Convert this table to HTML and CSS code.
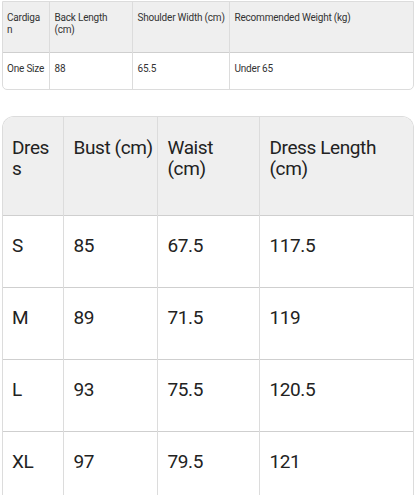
FILE: index.html
```html
<!DOCTYPE html>
<html>
<head>
<meta charset="utf-8">
<link rel="stylesheet" href="styles.css">
</head>
<body>
<div class="sheet sheet-small">
  <table class="grid small">
    <colgroup><col class="s1"><col class="s2"><col class="s3"><col class="s4"></colgroup>
    <thead>
      <tr><th class="narrow">Cardigan</th><th>Back Length (cm)</th><th class="one-line">Shoulder Width (cm)</th><th>Recommended Weight (kg)</th></tr>
    </thead>
    <tbody>
      <tr><td class="one-line">One Size</td><td>88</td><td>65.5</td><td>Under 65</td></tr>
    </tbody>
  </table>
</div>
<div class="sheet sheet-large">
  <table class="grid large">
    <colgroup><col class="l1"><col class="l2"><col class="l3"><col class="l4"></colgroup>
    <thead>
      <tr><th>Dress</th><th class="one-line">Bust (cm)</th><th>Waist (cm)</th><th>Dress Length (cm)</th></tr>
    </thead>
    <tbody>
      <tr><td>S</td><td>85</td><td>67.5</td><td>117.5</td></tr>
      <tr><td>M</td><td>89</td><td>71.5</td><td>119</td></tr>
      <tr><td>L</td><td>93</td><td>75.5</td><td>120.5</td></tr>
      <tr><td>XL</td><td>97</td><td>79.5</td><td>121</td></tr>
    </tbody>
  </table>
</div>
</body>
</html>
```
FILE: styles.css
```css
html, body {
  margin: 0;
  padding: 0;
  background: #ffffff;
  height: 495px;
  overflow: hidden;
}
body {
  font-family: Roboto, "Noto Sans", sans-serif;
  color: #222;
}
.sheet {
  margin-left: 2px;
  width: 410px;
  border: 1px solid #dcdcdc;
  overflow: hidden;
}
.sheet-small {
  margin-top: 1px;
  border-radius: 0 0 5px 5px;
}
.sheet-large {
  margin-top: 26px;
  border-radius: 12px 12px 0 0;
  border-bottom: none;
}
.grid {
  width: 100%;
  border-collapse: collapse;
  table-layout: fixed;
}
.grid th, .grid td {
  text-align: left;
  vertical-align: top;
  font-weight: 400;
  overflow-wrap: anywhere;
  border-left: 1px solid #dcdcdc;
}
.grid th:first-child, .grid td:first-child { border-left: none; }
.grid thead th { background: #efefef; }
.grid tbody tr { border-top: 1px solid #cfcfcf; }
.grid thead tr { border-bottom: 1px solid #cfcfcf; }
.grid .one-line { white-space: nowrap; overflow-wrap: normal; }

.small { font-size: 10px; letter-spacing: -0.2px; color: #333; }
.small th, .small td { padding: 10px 2px 0 4px; line-height: 12px; }
.small thead th { height: 40px; }
.small tbody td { height: 26px; padding-top: 10px; }
.small th:not(:first-child), .small td:not(:first-child) { padding-left: 5px; }
.small th.narrow { padding-right: 5px; }
.s1 { width: 46px; }
.s2 { width: 83px; }
.s3 { width: 97px; }

.large { font-size: 19px; letter-spacing: -0.4px; }
.large th, .large td { padding: 20px 4px 0 9px; line-height: 21px; }
.large th:first-child, .large td:first-child { padding-right: 9px; }
.large thead th { height: 78px; }
.large tbody td { height: 52px; padding-top: 19px; }
.large th:not(:first-child), .large td:not(:first-child) { padding-left: 10px; }
.l1 { width: 60px; }
.l2 { width: 94px; }
.l3 { width: 102px; }
```
